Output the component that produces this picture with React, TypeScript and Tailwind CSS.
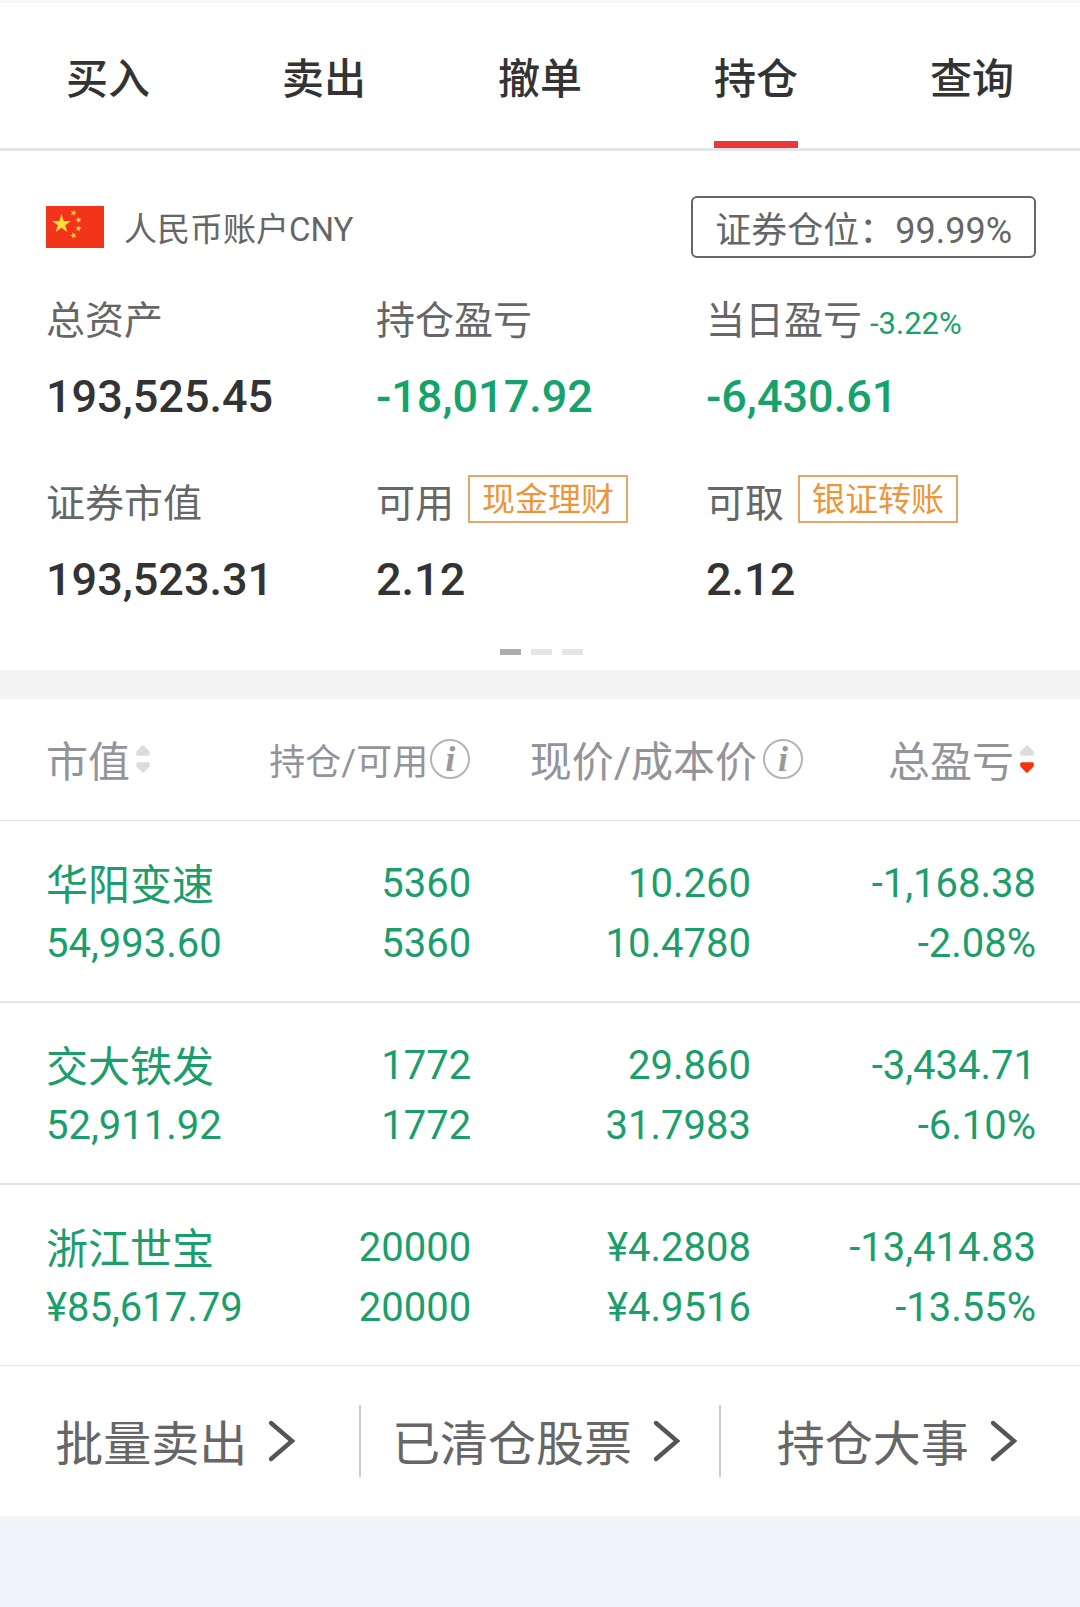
import { useState } from 'react'

const tabs = ['买入', '卖出', '撤单', '持仓', '查询']

const holdings = [
  {
    name: '华阳变速',
    value: '54,993.60',
    held: '5360',
    available: '5360',
    price: '10.260',
    cost: '10.4780',
    profit: '-1,168.38',
    rate: '-2.08%',
  },
  {
    name: '交大铁发',
    value: '52,911.92',
    held: '1772',
    available: '1772',
    price: '29.860',
    cost: '31.7983',
    profit: '-3,434.71',
    rate: '-6.10%',
  },
  {
    name: '浙江世宝',
    value: '¥85,617.79',
    held: '20000',
    available: '20000',
    price: '¥4.2808',
    cost: '¥4.9516',
    profit: '-13,414.83',
    rate: '-13.55%',
  },
]

const links = ['批量卖出', '已清仓股票', '持仓大事']

const STAR = 'M0 -10 L2.25 -3.09 L9.51 -3.09 L3.63 1.18 L5.88 8.09 L0 3.82 L-5.88 8.09 L-3.63 1.18 L-9.51 -3.09 L-2.25 -3.09 Z'

function Flag() {
  return (
    <svg className="h-[42px] w-[58px] shrink-0" viewBox="0 0 58 42" aria-hidden="true">
      <rect width="58" height="42" fill="#f2341b" />
      <g fill="#ffdc3c">
        <path d={STAR} transform="translate(15.5 18)" />
        <path d={STAR} transform="translate(27.5 7) rotate(20) scale(.34)" />
        <path d={STAR} transform="translate(32.5 14) rotate(-10) scale(.34)" />
        <path d={STAR} transform="translate(32.5 22.5) rotate(10) scale(.34)" />
        <path d={STAR} transform="translate(27.5 29.5) rotate(-20) scale(.34)" />
      </g>
    </svg>
  )
}

function SortIcon({ active = false }: { active?: boolean }) {
  return (
    <svg className="h-7 w-[14px] shrink-0" viewBox="0 0 14 28" strokeWidth="3" strokeLinejoin="round" aria-hidden="true">
      <path d="M7 1.8 L12.3 7.2 V9.3 H1.7 V7.2 Z" fill="#dcdcdc" stroke="#dcdcdc" />
      <path
        d="M7 26.2 L12.3 20.8 V18.7 H1.7 V20.8 Z"
        fill={active ? '#f5330f' : '#dcdcdc'}
        stroke={active ? '#f5330f' : '#dcdcdc'}
      />
    </svg>
  )
}

function InfoButton({ label }: { label: string }) {
  return (
    <button
      type="button"
      aria-label={label}
      className="flex size-10 shrink-0 items-center justify-center rounded-full border-2 border-[#b4b4b4] font-['Liberation_Serif',serif] text-[36px] leading-9 font-bold text-[#999] italic"
    >
      i
    </button>
  )
}

function Chevron() {
  return (
    <svg className="h-11 w-9 shrink-0" viewBox="0 0 36 44" fill="none" aria-hidden="true">
      <path d="M4 4 L25 22 L4 40" stroke="#555" strokeWidth="4.4" strokeLinecap="round" />
    </svg>
  )
}

export default function App() {
  const [tab, setTab] = useState('持仓')

  return (
    <div className="min-h-screen bg-[#f3f4f9] font-['Roboto','Noto_Sans_CJK_SC',sans-serif] text-[#333]">
      <nav className="flex border-t-[3px] border-b-[3px] border-t-[#f7f7f7] border-b-[#e5e5eb] bg-white">
        {tabs.map((name) => (
          <button
            key={name}
            type="button"
            onClick={() => setTab(name)}
            className="flex flex-1 justify-center pt-[47px] text-[42px] leading-[60px] font-medium"
          >
            <span className={`border-b-[7px] pb-[31px] ${tab === name ? 'border-[#e8383a]' : 'border-transparent'}`}>
              {name}
            </span>
          </button>
        ))}
      </nav>

      <section className="bg-white pt-[45px] pr-11 pb-[15px] pl-[46px]">
        <div className="flex items-center justify-between text-[#666]">
          <div className="flex items-center gap-5">
            <Flag />
            <span className="pt-[6px] text-[33px] leading-[54px]">人民币账户CNY</span>
          </div>
          <div className="rounded-md border-2 border-[#666] px-[22px] pt-2 text-[36px] leading-[50px]">
            证券仓位：99.99%
          </div>
        </div>

        <dl className="mt-[33px] grid grid-cols-3 gap-y-[47px] text-[39px] leading-[60px] text-[#666]">
          <div>
            <dt>总资产</dt>
            <dd className="mt-4 text-[45px] font-medium text-[#333]">193,525.45</dd>
          </div>
          <div>
            <dt>持仓盈亏</dt>
            <dd className="mt-4 text-[45px] font-medium text-[#16a26b]">-18,017.92</dd>
          </div>
          <div>
            <dt>
              当日盈亏
              <span className="ml-2 text-[31px] leading-none text-[#16a26b]">-3.22%</span>
            </dt>
            <dd className="mt-4 text-[45px] font-medium text-[#16a26b]">-6,430.61</dd>
          </div>
          <div>
            <dt>证券市值</dt>
            <dd className="mt-4 text-[45px] font-medium text-[#333]">193,523.31</dd>
          </div>
          <div>
            <dt className="flex gap-[14px]">
              可用
              <button type="button" className="mt-px h-12 border-2 border-[#e3a868] px-3 text-[33px] leading-[46px] text-[#ec9639]">
                现金理财
              </button>
            </dt>
            <dd className="mt-4 text-[45px] font-medium text-[#333]">2.12</dd>
          </div>
          <div>
            <dt className="flex gap-[14px]">
              可取
              <button type="button" className="mt-px h-12 border-2 border-[#e3a868] px-3 text-[33px] leading-[46px] text-[#ec9639]">
                银证转账
              </button>
            </dt>
            <dd className="mt-4 text-[45px] font-medium text-[#333]">2.12</dd>
          </div>
        </dl>

        <div className="mt-[39px] flex justify-center gap-[10px]">
          <span className="h-[6px] w-[21px] bg-[#adadad]" />
          <span className="h-[6px] w-[21px] bg-[#e5e5e5]" />
          <span className="h-[6px] w-[21px] bg-[#e5e5e5]" />
        </div>
      </section>

      <section className="border-t-[29px] border-[#f4f4f4] bg-white">
        <table className="w-full table-fixed border-collapse">
          <thead className="text-[42px] leading-[60px] text-[#939399]">
            <tr className="h-[121px] border-b border-[#e4e4e4]">
              <th className="w-[24%] pl-[46px] font-normal">
                <button type="button" className="flex items-center gap-[6px]">
                  <span className="mt-2">市值</span>
                  <SortIcon />
                </button>
              </th>
              <th className="w-[20%] pr-[5px] font-normal">
                <div className="flex items-center justify-end gap-[2px] text-[36px]">
                  <span className="mt-2">持仓/可用</span>
                  <InfoButton label="持仓/可用说明" />
                </div>
              </th>
              <th className="w-[31%] pr-[7px] font-normal">
                <div className="flex items-center justify-end gap-[6px]">
                  <span className="mt-2">现价/成本价</span>
                  <InfoButton label="现价/成本价说明" />
                </div>
              </th>
              <th className="w-[25%] pr-[46px] font-normal">
                <button type="button" className="ml-auto flex items-center gap-[6px]">
                  <span className="mt-2">总盈亏</span>
                  <SortIcon active />
                </button>
              </th>
            </tr>
          </thead>
          <tbody className="text-right text-[40px] leading-[60px] text-[#1b9e6c]">
            {holdings.map((row) => (
              <tr key={row.name} className="border-b-2 border-[#e5e5eb] last:border-b">
                <td className="pt-[33px] pb-[27px] pl-[46px] text-left">
                  <div className="pt-1 text-[42px] leading-[56px]">{row.name}</div>
                  <div>{row.value}</div>
                </td>
                <td className="pt-[33px] pr-1 pb-[27px]">
                  <div>{row.held}</div>
                  <div>{row.available}</div>
                </td>
                <td className="pt-[33px] pr-[59px] pb-[27px]">
                  <div>{row.price}</div>
                  <div>{row.cost}</div>
                </td>
                <td className="pt-[33px] pr-11 pb-[27px]">
                  <div>{row.profit}</div>
                  <div>{row.rate}</div>
                </td>
              </tr>
            ))}
          </tbody>
        </table>

        <div className="flex divide-x-2 divide-[#ccc] pt-[39px] pb-[39px] text-[48px] leading-[64px] text-[#666]">
          {links.map((name) => (
            <a key={name} href="#" className="flex flex-1 items-center justify-center gap-5">
              <span className="pt-2">{name}</span>
              <Chevron />
            </a>
          ))}
        </div>
      </section>
    </div>
  )
}
